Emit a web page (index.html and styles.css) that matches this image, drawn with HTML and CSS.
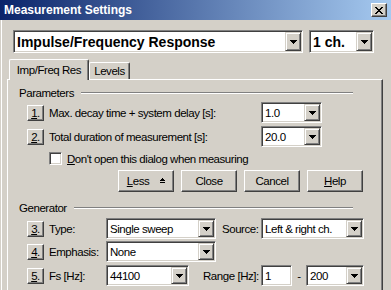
FILE: index.html
```html
<!DOCTYPE html>
<html lang="en">
<head>
    <meta charset="UTF-8">
    <title>Measurement Settings</title>
    <link rel="stylesheet" href="styles.css">
</head>
<body>
    <div class="window">
        <div class="titlebar">
            <span class="title">Measurement Settings</span>
            <span class="close-btn">
                <svg width="8" height="7" viewBox="0 0 8 7" shape-rendering="crispEdges"><path d="M0 0h2v1h-2zM6 0h2v1h-2zM1 1h2v1h-2zM5 1h2v1h-2zM2 2h4v1h-4zM3 3h2v1h-2zM2 4h4v1h-4zM1 5h2v1h-2zM5 5h2v1h-2zM0 6h2v1h-2zM6 6h2v1h-2z" fill="#000"/></svg>
            </span>
        </div>

        <div class="client">
            <div class="mode-row">
                <div class="combo combo-mode">
                    <span class="combo-text bold">Impulse/Frequency Response</span>
                    <span class="drop-btn"><svg class="arrow" width="7" height="4" viewBox="0 0 7 4" shape-rendering="crispEdges"><path d="M0 0h7v1h-7zM1 1h5v1h-5zM2 2h3v1h-3zM3 3h1v1h-1z" fill="#000"/></svg></span>
                </div>
                <div class="combo combo-ch">
                    <span class="combo-text bold">1 ch.</span>
                    <span class="drop-btn"><svg class="arrow" width="7" height="4" viewBox="0 0 7 4" shape-rendering="crispEdges"><path d="M0 0h7v1h-7zM1 1h5v1h-5zM2 2h3v1h-3zM3 3h1v1h-1z" fill="#000"/></svg></span>
                </div>
            </div>

            <div class="tabs">
                <div class="tab active">Imp/Freq Res</div>
                <div class="tab">Levels</div>
            </div>

            <div class="panel">
                <div class="group-title"><span>Parameters</span><span class="etch"></span></div>

                <div class="row row-first">
                    <span class="num-btn"><u>1</u>.</span>
                    <span class="label label-wide">Max. decay time + system delay [s]:</span>
                    <div class="combo combo-small">
                        <span class="combo-text">1.0</span>
                        <span class="drop-btn"><svg class="arrow" width="7" height="4" viewBox="0 0 7 4" shape-rendering="crispEdges"><path d="M0 0h7v1h-7zM1 1h5v1h-5zM2 2h3v1h-3zM3 3h1v1h-1z" fill="#000"/></svg></span>
                    </div>
                </div>

                <div class="row">
                    <span class="num-btn"><u>2</u>.</span>
                    <span class="label label-wide">Total duration of measurement [s]:</span>
                    <div class="combo combo-small">
                        <span class="combo-text">20.0</span>
                        <span class="drop-btn"><svg class="arrow" width="7" height="4" viewBox="0 0 7 4" shape-rendering="crispEdges"><path d="M0 0h7v1h-7zM1 1h5v1h-5zM2 2h3v1h-3zM3 3h1v1h-1z" fill="#000"/></svg></span>
                    </div>
                </div>

                <div class="check-row">
                    <span class="checkbox"></span>
                    <span class="label"><u>D</u>on't open this dialog when measuring</span>
                </div>

                <div class="button-row">
                    <span class="push-btn"><span><u>L</u>ess</span><svg class="less-icon" width="5" height="6" viewBox="0 0 5 6" shape-rendering="crispEdges"><path d="M2 0h1v1h-1zM1 1h3v1h-3zM0 2h5v1h-5zM0 4h5v1h-5z" fill="#000"/></svg></span>
                    <span class="push-btn">Close</span>
                    <span class="push-btn">Cancel</span>
                    <span class="push-btn"><span><u>H</u>elp</span></span>
                </div>

                <div class="group-title group-gen"><span>Generator</span><span class="etch"></span></div>

                <div class="row row-gen-first">
                    <span class="num-btn"><u>3</u>.</span>
                    <span class="label label-short">Type:</span>
                    <div class="combo combo-mid">
                        <span class="combo-text">Single sweep</span>
                        <span class="drop-btn"><svg class="arrow" width="7" height="4" viewBox="0 0 7 4" shape-rendering="crispEdges"><path d="M0 0h7v1h-7zM1 1h5v1h-5zM2 2h3v1h-3zM3 3h1v1h-1z" fill="#000"/></svg></span>
                    </div>
                    <span class="label side-label">Source:</span>
                    <div class="combo combo-source">
                        <span class="combo-text">Left &amp; right ch.</span>
                        <span class="drop-btn"><svg class="arrow" width="7" height="4" viewBox="0 0 7 4" shape-rendering="crispEdges"><path d="M0 0h7v1h-7zM1 1h5v1h-5zM2 2h3v1h-3zM3 3h1v1h-1z" fill="#000"/></svg></span>
                    </div>
                </div>

                <div class="row row-gen">
                    <span class="num-btn"><u>4</u>.</span>
                    <span class="label label-short">Emphasis:</span>
                    <div class="combo combo-mid">
                        <span class="combo-text">None</span>
                        <span class="drop-btn"><svg class="arrow" width="7" height="4" viewBox="0 0 7 4" shape-rendering="crispEdges"><path d="M0 0h7v1h-7zM1 1h5v1h-5zM2 2h3v1h-3zM3 3h1v1h-1z" fill="#000"/></svg></span>
                    </div>
                </div>

                <div class="row row-gen">
                    <span class="num-btn"><u>5</u>.</span>
                    <span class="label label-short">Fs [Hz]:</span>
                    <div class="combo combo-fs">
                        <span class="combo-text">44100</span>
                        <span class="drop-btn"><svg class="arrow" width="7" height="4" viewBox="0 0 7 4" shape-rendering="crispEdges"><path d="M0 0h7v1h-7zM1 1h5v1h-5zM2 2h3v1h-3zM3 3h1v1h-1z" fill="#000"/></svg></span>
                    </div>
                    <span class="label range-label">Range [Hz]:</span>
                    <div class="edit"><span class="combo-text">1</span></div>
                    <span class="dash">-</span>
                    <div class="combo combo-range">
                        <span class="combo-text">200</span>
                        <span class="drop-btn"><svg class="arrow" width="7" height="4" viewBox="0 0 7 4" shape-rendering="crispEdges"><path d="M0 0h7v1h-7zM1 1h5v1h-5zM2 2h3v1h-3zM3 3h1v1h-1z" fill="#000"/></svg></span>
                    </div>
                </div>
            </div>
        </div>
    </div>
</body>
</html>
```

FILE: styles.css
```css
* {
    margin: 0;
    padding: 0;
    box-sizing: border-box;
}

body {
    font-family: "Liberation Sans", Arial, sans-serif;
    font-size: 11.5px;
    letter-spacing: -0.45px;
    color: #000;
    background: #d4d0c8;
}

.window {
    width: 391px;
    height: 290px;
    overflow: hidden;
    background: #d4d0c8;
}

.titlebar {
    height: 20px;
    display: flex;
    align-items: center;
    padding-left: 4px;
    background: linear-gradient(to right, #0a246a, #a6caf0);
}

.title {
    font-weight: bold;
    font-size: 12px;
    letter-spacing: 0;
    color: #fff;
}

.close-btn {
    margin-left: auto;
    margin-right: 4px;
    width: 16px;
    height: 14px;
    display: flex;
    align-items: center;
    justify-content: center;
    background: #d4d0c8;
    border: 1px solid;
    border-color: #fff #404040 #404040 #fff;
    box-shadow: inset -1px -1px #808080;
}

.client {
    margin-left: 1px;
    border-left: 1px solid #fff;
    padding-top: 10px;
    height: 270px;
}

/* sunken field with a drop button */
.combo, .edit {
    display: flex;
    align-items: stretch;
    height: 21px;
    background: #fff;
    border: 1px solid;
    border-color: #808080 #fff #fff #808080;
    box-shadow: inset 1px 1px #404040, inset -1px -1px #d4d0c8;
    padding: 1px;
    flex: none;
}

.combo-text {
    flex: 1;
    display: flex;
    align-items: center;
    padding-left: 2px;
    white-space: nowrap;
    overflow: hidden;
}

.bold {
    font-weight: bold;
    font-size: 14px;
    letter-spacing: 0;
}

.drop-btn {
    width: 16px;
    flex: none;
    display: flex;
    align-items: center;
    justify-content: center;
    background: #d4d0c8;
    border: 1px solid;
    border-color: #d4d0c8 #404040 #404040 #d4d0c8;
    box-shadow: inset 1px 1px #fff, inset -1px -1px #808080;
}

.mode-row {
    display: flex;
    gap: 6px;
    margin-left: 11px;
}

.mode-row .combo {
    height: 23px;
}

.combo-mode {
    width: 290px;
}

.combo-ch {
    width: 65px;
}

.tabs {
    display: flex;
    align-items: flex-end;
    margin-top: 6px;
    margin-left: 7px;
    height: 20px;
}

.tab {
    height: 17px;
    width: 41px;
    display: flex;
    align-items: center;
    justify-content: center;
    white-space: nowrap;
    border: 1px solid;
    border-bottom: none;
    border-color: #fff #404040 #404040 #fff;
    border-radius: 2px 2px 0 0;
    box-shadow: inset -1px 0 #808080;
}

.tab.active {
    position: relative;
    z-index: 1;
    width: 80px;
    height: 21px;
    margin-bottom: -1px;
    background: #d4d0c8;
}

.panel {
    margin-left: 5px;
    width: 376px;
    height: 240px;
    border-top: 1px solid #fff;
    border-left: 1px solid #fff;
    border-right: 1px solid #404040;
    box-shadow: inset -1px 0 #808080;
    padding-top: 6px;
}

.group-title {
    display: flex;
    align-items: center;
    height: 14px;
    margin-left: 11px;
    margin-right: 29px;
    gap: 7px;
}

.etch {
    flex: 1;
    height: 2px;
    border-top: 1px solid #808080;
    border-bottom: 1px solid #fff;
}

.group-gen {
    margin-top: 9px;
}

.row {
    display: flex;
    align-items: center;
    height: 21px;
    margin-top: 3px;
    padding-left: 19px;
}

.row-first {
    margin-top: 2px;
}

.row-gen-first {
    margin-top: 3px;
}

.row-gen {
    margin-top: 2px;
}

.row-gen + .row-gen {
    margin-top: 3px;
}

.num-btn {
    width: 17px;
    height: 16px;
    flex: none;
    display: flex;
    align-items: center;
    justify-content: center;
    border: 1px solid;
    border-color: #fff #404040 #404040 #fff;
    box-shadow: inset -1px -1px #808080;
    margin-right: 5px;
}

.label {
    white-space: nowrap;
    flex: none;
}

.label-wide {
    width: 212px;
}

.label-short {
    width: 57px;
}

.combo-small {
    width: 61px;
}

.combo-mid {
    width: 110px;
}

.side-label {
    margin-left: 6px;
    width: 39px;
}

.combo-source {
    width: 103px;
}

.combo-fs {
    width: 83px;
}

.range-label {
    margin-left: 14px;
    width: 58px;
}

.edit {
    width: 31px;
}

.dash {
    width: 14px;
    text-align: center;
}

.combo-range {
    width: 58px;
}

.check-row {
    display: flex;
    align-items: center;
    height: 15px;
    margin-top: 4px;
    padding-left: 41px;
    gap: 5px;
}

.checkbox {
    width: 13px;
    height: 13px;
    background: #fff;
    border: 1px solid;
    border-color: #808080 #fff #fff #808080;
    box-shadow: inset 1px 1px #404040, inset -1px -1px #d4d0c8;
}

.button-row {
    display: flex;
    gap: 7px;
    height: 22px;
    margin-top: 4px;
    padding-left: 110px;
}

.push-btn {
    width: 56px;
    display: flex;
    align-items: center;
    justify-content: center;
    gap: 11px;
    border: 1px solid;
    border-color: #fff #404040 #404040 #fff;
    box-shadow: inset -1px -1px #808080;
}
```
